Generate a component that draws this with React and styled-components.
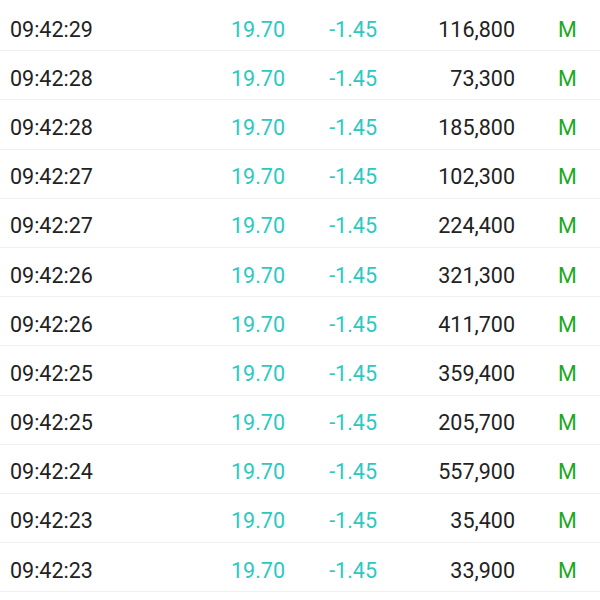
import React from "react";
import styled, { createGlobalStyle } from "styled-components";

const GlobalStyle = createGlobalStyle`
  html, body {
    margin: 0;
    padding: 0;
    background: #ffffff;
  }
  body {
    font-family: Roboto, "Noto Sans", "Liberation Sans", sans-serif;
  }
`;

const trades = [
  { time: "09:42:29", price: "19.70", change: "-1.45", volume: "116,800", side: "M" },
  { time: "09:42:28", price: "19.70", change: "-1.45", volume: "73,300", side: "M" },
  { time: "09:42:28", price: "19.70", change: "-1.45", volume: "185,800", side: "M" },
  { time: "09:42:27", price: "19.70", change: "-1.45", volume: "102,300", side: "M" },
  { time: "09:42:27", price: "19.70", change: "-1.45", volume: "224,400", side: "M" },
  { time: "09:42:26", price: "19.70", change: "-1.45", volume: "321,300", side: "M" },
  { time: "09:42:26", price: "19.70", change: "-1.45", volume: "411,700", side: "M" },
  { time: "09:42:25", price: "19.70", change: "-1.45", volume: "359,400", side: "M" },
  { time: "09:42:25", price: "19.70", change: "-1.45", volume: "205,700", side: "M" },
  { time: "09:42:24", price: "19.70", change: "-1.45", volume: "557,900", side: "M" },
  { time: "09:42:23", price: "19.70", change: "-1.45", volume: "35,400", side: "M" },
  { time: "09:42:23", price: "19.70", change: "-1.45", volume: "33,900", side: "M" },
];

const TradeList = styled.div`
  width: 600px;
  padding-top: 2px;
`;

const Row = styled.div`
  box-sizing: border-box;
  display: grid;
  grid-template-columns: 160px 115px 92px 138px 1fr;
  align-items: center;
  height: 49.2px;
  padding: 6px 0 0 10px;
  border-bottom: 1px solid #f0f0f0;
  font-size: 21.5px;
  color: #222222;
`;

const Cell = styled.span`
  text-align: ${(p) => (p.$right ? "right" : "left")};
  color: ${(p) => p.$color || "inherit"};
  padding-left: ${(p) => p.$indent || 0}px;
`;

const App = () => (
  <>
    <GlobalStyle />
    <TradeList>
      {trades.map((t, i) => (
        <Row key={i}>
          <Cell>{t.time}</Cell>
          <Cell $right $color="#2cc9c1">{t.price}</Cell>
          <Cell $right $color="#2cc9c1">{t.change}</Cell>
          <Cell $right>{t.volume}</Cell>
          <Cell $color="#1ea81e" $indent={43}>{t.side}</Cell>
        </Row>
      ))}
    </TradeList>
  </>
);

export default App;
